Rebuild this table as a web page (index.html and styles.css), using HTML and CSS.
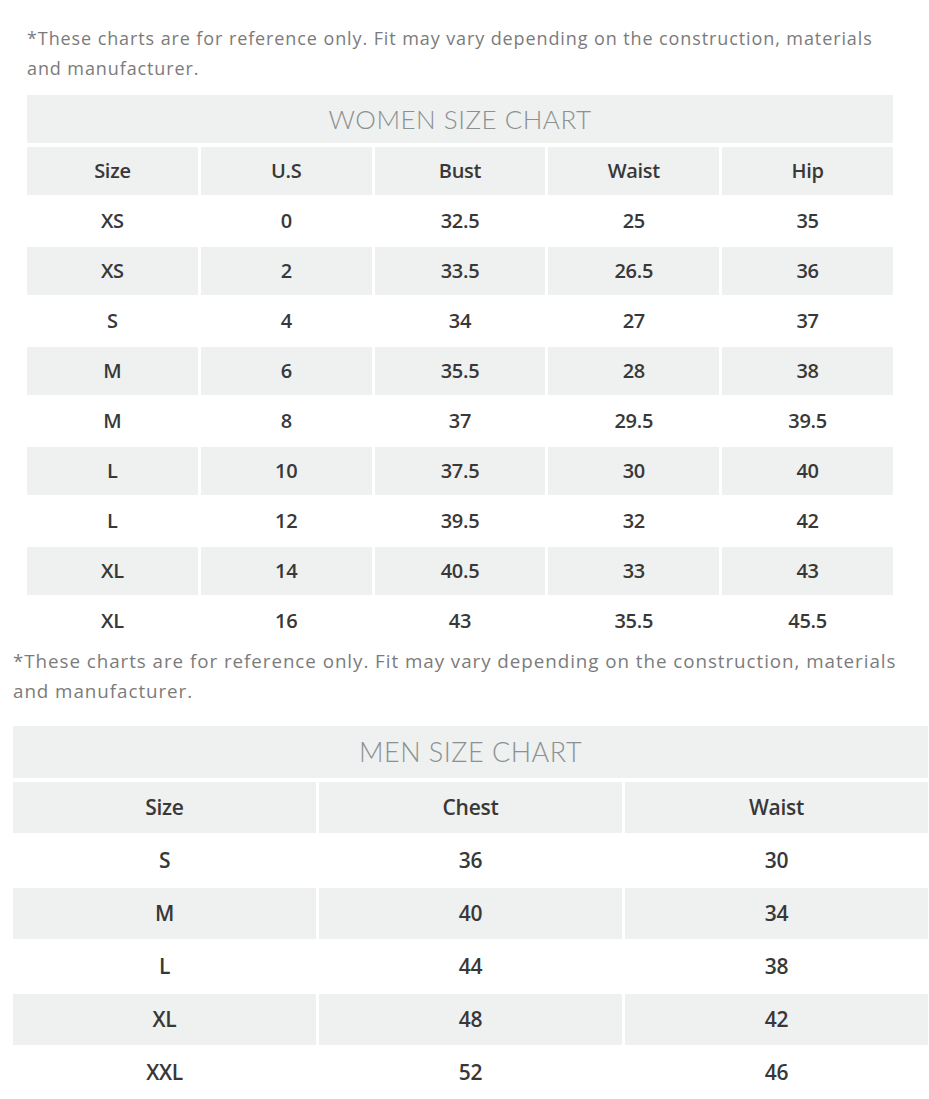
FILE: index.html
```html
<!DOCTYPE html>
<html lang="en">
<head>
<meta charset="utf-8">
<title>Size Charts</title>
<link rel="stylesheet" href="styles.css">
</head>
<body>
<section class="women">
  <p class="note">*These charts are for reference only. Fit may vary depending on the construction, materials<br>and manufacturer.</p>
  <div class="chart chart-5">
    <div class="title">WOMEN SIZE CHART</div>
    <div class="hd">Size</div><div class="hd">U.S</div><div class="hd">Bust</div><div class="hd">Waist</div><div class="hd">Hip</div>
    <div class="c">XS</div><div class="c">0</div><div class="c">32.5</div><div class="c">25</div><div class="c">35</div>
    <div class="c s">XS</div><div class="c s">2</div><div class="c s">33.5</div><div class="c s">26.5</div><div class="c s">36</div>
    <div class="c">S</div><div class="c">4</div><div class="c">34</div><div class="c">27</div><div class="c">37</div>
    <div class="c s">M</div><div class="c s">6</div><div class="c s">35.5</div><div class="c s">28</div><div class="c s">38</div>
    <div class="c">M</div><div class="c">8</div><div class="c">37</div><div class="c">29.5</div><div class="c">39.5</div>
    <div class="c s">L</div><div class="c s">10</div><div class="c s">37.5</div><div class="c s">30</div><div class="c s">40</div>
    <div class="c">L</div><div class="c">12</div><div class="c">39.5</div><div class="c">32</div><div class="c">42</div>
    <div class="c s">XL</div><div class="c s">14</div><div class="c s">40.5</div><div class="c s">33</div><div class="c s">43</div>
    <div class="c">XL</div><div class="c">16</div><div class="c">43</div><div class="c">35.5</div><div class="c">45.5</div>
  </div>
</section>
<section class="men">
  <p class="note">*These charts are for reference only. Fit may vary depending on the construction, materials<br>and manufacturer.</p>
  <div class="chart chart-3">
    <div class="title">MEN SIZE CHART</div>
    <div class="hd">Size</div><div class="hd">Chest</div><div class="hd">Waist</div>
    <div class="c">S</div><div class="c">36</div><div class="c">30</div>
    <div class="c s">M</div><div class="c s">40</div><div class="c s">34</div>
    <div class="c">L</div><div class="c">44</div><div class="c">38</div>
    <div class="c s">XL</div><div class="c s">48</div><div class="c s">42</div>
    <div class="c">XXL</div><div class="c">52</div><div class="c">46</div>
  </div>
</section>
</body>
</html>
```

FILE: styles.css
```css
html, body {
  margin: 0;
  padding: 0;
  background: #ffffff;
}
body {
  font-family: "Open Sans", Lato, sans-serif;
  color: #2e2e2e;
}
.note {
  margin: 0;
  color: #7b7b7b;
  font-size: 18px;
  line-height: 30px;
  letter-spacing: 0.9px;
  white-space: nowrap;
}
.women {
  padding: 23px 0 0 27px;
  width: 866px;
}
.women .chart {
  margin-top: 12px;
}
.chart {
  display: grid;
  column-gap: 3px;
  row-gap: 2px;
}
.chart-5 {
  grid-template-columns: repeat(5, 1fr);
}
.chart-3 {
  grid-template-columns: repeat(3, 1fr);
}
.title {
  grid-column: 1 / -1;
  background: #eff0f0;
  color: #8b9090;
  text-align: center;
  font-family: Lato, "Open Sans", sans-serif;
  font-weight: 300;
  letter-spacing: 0.5px;
  margin-bottom: 2px;
}
.hd, .c {
  text-align: center;
  font-size: 20px;
  font-weight: 600;
  color: #383838;
  letter-spacing: -0.3px;
}
.hd, .s {
  background: #eff0f0;
}
.women .title {
  height: 48px;
  line-height: 48px;
  font-size: 26px;
}
.women .hd, .women .c {
  height: 48px;
  line-height: 48px;
}
.men {
  padding: 1px 0 0 13px;
  width: 915px;
}
.men .note {
  font-size: 18.8px;
  letter-spacing: 0.95px;
}
.men .chart {
  margin-top: 20px;
}
.men .title {
  height: 52px;
  line-height: 52px;
  font-size: 27px;
  margin-bottom: 2px;
}
.men .hd, .men .c {
  height: 51px;
  line-height: 51px;
  font-size: 21px;
}
```
